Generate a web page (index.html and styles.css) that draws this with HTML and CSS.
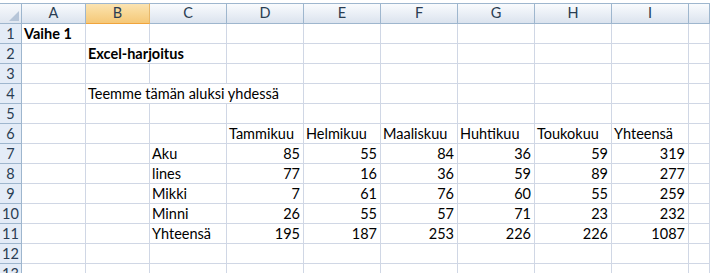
FILE: index.html
```html
<!DOCTYPE html><html><head><meta charset="utf-8"/>
<title>Excel-harjoitus</title>
<link rel="stylesheet" href="styles.css">
</head>
<body>

<div class="sheet">
	<!-- column headers -->
	<div class="corner"><span class="tri"></span></div>
	<div class="ch">A</div><div class="ch sel">B</div><div class="ch">C</div><div class="ch">D</div><div class="ch">E</div>
	<div class="ch">F</div><div class="ch">G</div><div class="ch">H</div><div class="ch">I</div><div class="ch"></div>

	<div class="rh">1</div>
	<div class="c b">Vaihe 1</div><div class="c"></div><div class="c"></div><div class="c"></div><div class="c"></div>
	<div class="c"></div><div class="c"></div><div class="c"></div><div class="c"></div><div class="c"></div>

	<div class="rh">2</div>
	<div class="c"></div><div class="c b span2">Excel-harjoitus</div><div class="c"></div><div class="c"></div>
	<div class="c"></div><div class="c"></div><div class="c"></div><div class="c"></div><div class="c"></div>

	<div class="rh">3</div>
	<div class="c"></div><div class="c"></div><div class="c"></div><div class="c"></div><div class="c"></div>
	<div class="c"></div><div class="c"></div><div class="c"></div><div class="c"></div><div class="c"></div>

	<div class="rh">4</div>
	<div class="c"></div><div class="c span3">Teemme tämän aluksi yhdessä</div><div class="c"></div>
	<div class="c"></div><div class="c"></div><div class="c"></div><div class="c"></div><div class="c"></div>

	<div class="rh">5</div>
	<div class="c"></div><div class="c"></div><div class="c"></div><div class="c"></div><div class="c"></div>
	<div class="c"></div><div class="c"></div><div class="c"></div><div class="c"></div><div class="c"></div>

	<div class="rh">6</div>
	<div class="c"></div><div class="c"></div><div class="c"></div><div class="c">Tammikuu</div><div class="c">Helmikuu</div>
	<div class="c">Maaliskuu</div><div class="c">Huhtikuu</div><div class="c">Toukokuu</div><div class="c">Yhteensä</div><div class="c"></div>

	<div class="rh">7</div>
	<div class="c"></div><div class="c"></div><div class="c">Aku</div><div class="c n">85</div><div class="c n">55</div>
	<div class="c n">84</div><div class="c n">36</div><div class="c n">59</div><div class="c n">319</div><div class="c"></div>

	<div class="rh">8</div>
	<div class="c"></div><div class="c"></div><div class="c">lines</div><div class="c n">77</div><div class="c n">16</div>
	<div class="c n">36</div><div class="c n">59</div><div class="c n">89</div><div class="c n">277</div><div class="c"></div>

	<div class="rh">9</div>
	<div class="c"></div><div class="c"></div><div class="c">Mikki</div><div class="c n">7</div><div class="c n">61</div>
	<div class="c n">76</div><div class="c n">60</div><div class="c n">55</div><div class="c n">259</div><div class="c"></div>

	<div class="rh">10</div>
	<div class="c"></div><div class="c"></div><div class="c">Minni</div><div class="c n">26</div><div class="c n">55</div>
	<div class="c n">57</div><div class="c n">71</div><div class="c n">23</div><div class="c n">232</div><div class="c"></div>

	<div class="rh">11</div>
	<div class="c"></div><div class="c"></div><div class="c">Yhteensä</div><div class="c n">195</div><div class="c n">187</div>
	<div class="c n">253</div><div class="c n">226</div><div class="c n">226</div><div class="c n">1087</div><div class="c"></div>

	<div class="rh">12</div>
	<div class="c"></div><div class="c"></div><div class="c"></div><div class="c"></div><div class="c"></div>
	<div class="c"></div><div class="c"></div><div class="c"></div><div class="c"></div><div class="c"></div>

	<div class="rh">13</div>
	<div class="c"></div><div class="c"></div><div class="c"></div><div class="c"></div><div class="c"></div>
	<div class="c"></div><div class="c"></div><div class="c"></div><div class="c"></div><div class="c"></div>
</div>

</body>
</html>
```

FILE: styles.css
```css
body {
	margin: 0;
	overflow: hidden;
	background: #fff;
	font-family: Lato, "Liberation Sans", sans-serif;
	font-size: 14.5px;
}
/* sheet grid */
.sheet {
	display: grid;
	grid-template-columns: 22px 64px 64px repeat(7, 77px) 21px;
	grid-template-rows: 21px;
	grid-auto-rows: 20px;
	margin-top: 3px;
}
.sheet > div {
	box-sizing: border-box;
	overflow: hidden;
	white-space: nowrap;
}
/* headers */
.corner {
	position: relative;
	background: linear-gradient(#f7f9fc, #dfe6f0);
	border-top: 1px solid #9eb6ce;
	border-right: 1px solid #9eb6ce;
	border-bottom: 1px solid #9eb6ce;
}
.tri {
	position: absolute;
	right: 2px;
	bottom: 2px;
	width: 0;
	height: 0;
	border-left: 10px solid transparent;
	border-bottom: 10px solid #b6c5d8;
}
.ch {
	background: linear-gradient(#f9fbfd 0%, #eaeff6 50%, #dbe3ee 100%);
	border-top: 1px solid #9eb6ce;
	border-right: 1px solid #9eb6ce;
	border-bottom: 1px solid #9eb6ce;
	color: #2a3d52;
	text-align: center;
	line-height: 18px;
}
.ch.sel {
	background: linear-gradient(#fbe3b1 0%, #f8d693 50%, #f5c878 100%);
	border-bottom-color: #f0a43c;
	border-right-color: #e8b86a;
}
.rh {
	background: #e4ecf7;
	border-right: 1px solid #9eb6ce;
	border-bottom: 1px solid #9eb6ce;
	color: #2a3d52;
	text-align: center;
	line-height: 19px;
}
/* cells */
.c {
	border-right: 1px solid #d0d7e5;
	border-bottom: 1px solid #d0d7e5;
	padding: 0 2px;
	line-height: 19px;
	color: #000;
}
.c.b {
	font-weight: bold;
}
.c.n {
	text-align: right;
	padding-right: 3px;
}
.span2 {
	grid-column: span 2;
}
.span3 {
	grid-column: span 3;
}
```
